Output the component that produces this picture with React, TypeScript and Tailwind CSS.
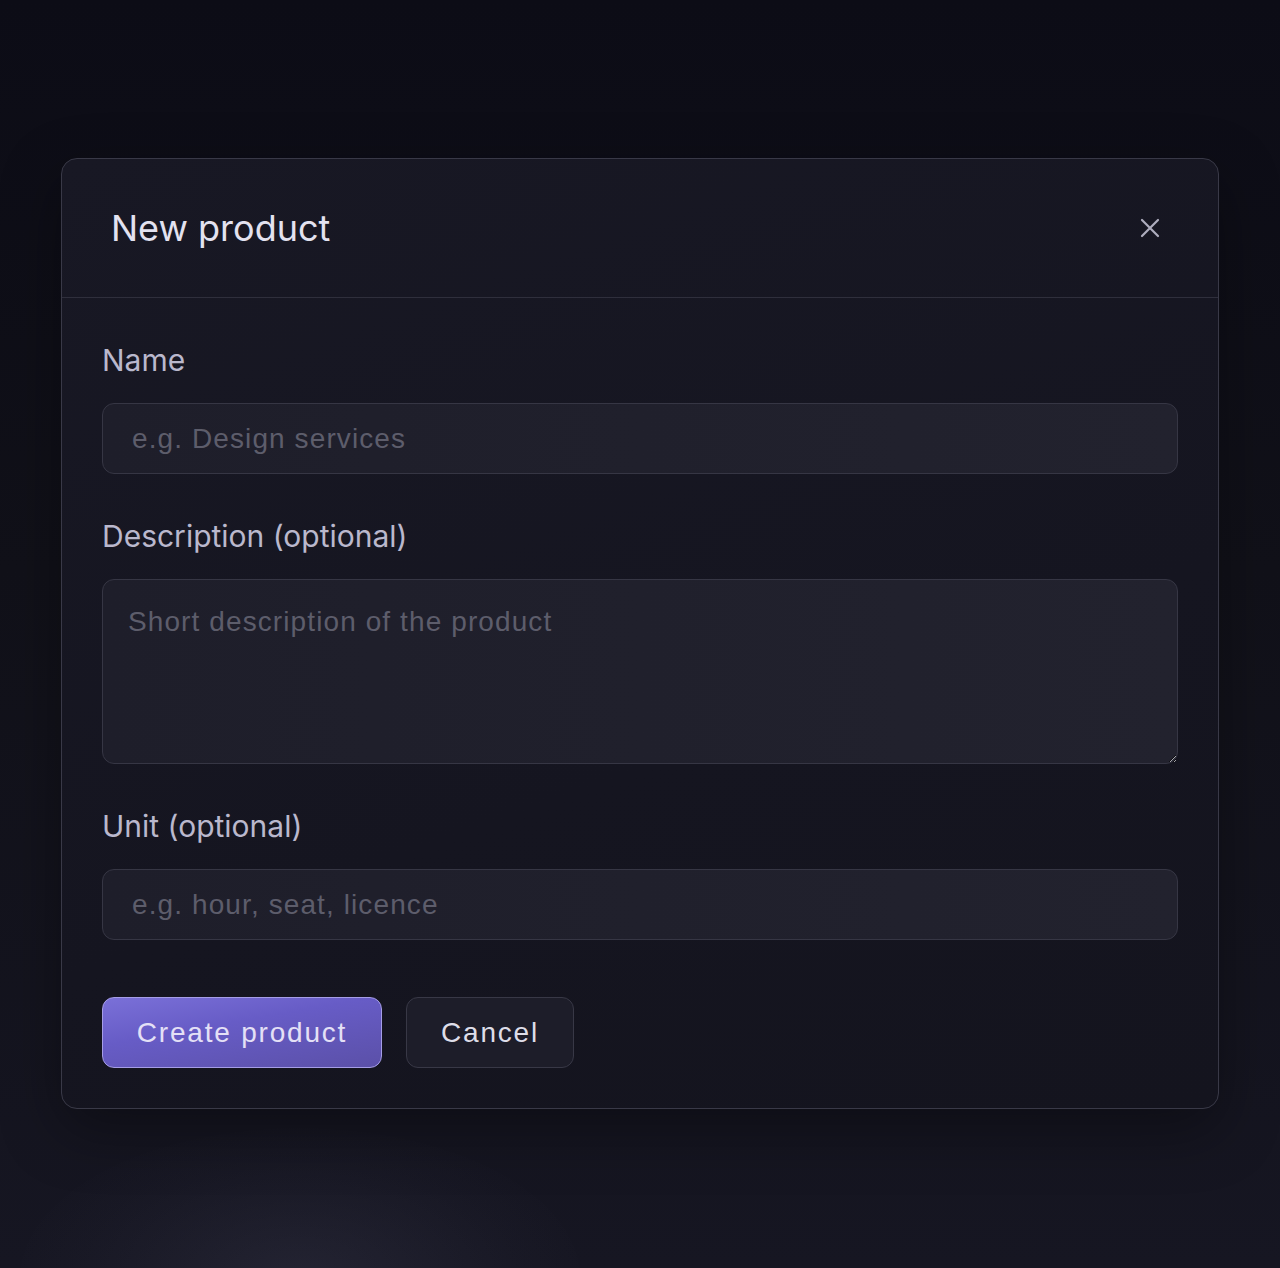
import React from "react";

const fieldCls =
  "mt-[25px] block w-full rounded-[12px] border border-[#363644] bg-[linear-gradient(90deg,#1e1e2a_0%,#22222e_100%)] font-['Liberation_Sans',Arial,sans-serif] text-[28px] tracking-[1.1px] text-[#d8d8e4] placeholder:text-[#5d5d6b] outline-none";
const labelCls =
  "block h-[36px] font-['Inter','Noto_Sans',sans-serif] text-[30px] leading-[36px] text-[#bab8cd]";

export default function App() {
  return (
    <div className="relative min-h-[1268px] w-full overflow-hidden bg-[linear-gradient(180deg,#0c0c16_0%,#111119_45%,#161622_100%)] px-[61px] pt-[158px] font-['Inter','Noto_Sans',sans-serif]">
      <div className="pointer-events-none absolute bottom-[-160px] left-[20px] h-[300px] w-[560px] rounded-[50%] bg-[radial-gradient(ellipse_at_center,rgba(60,60,80,0.35)_0%,rgba(40,40,56,0.15)_55%,transparent_75%)]" />
      <div className="relative rounded-[16px] border border-[#393947] bg-[linear-gradient(160deg,#181824_0%,#151520_60%,#14141e_100%)] shadow-[0_20px_60px_rgba(0,0,0,0.35)]">
        <div className="flex h-[139px] items-center justify-between border-b border-[#2f2f3c] pl-[49px] pr-[58px]">
          <h1 className="text-[36px] font-normal leading-none text-[#e3e2f0]">New product</h1>
          <button className="flex h-[20px] w-[20px] items-center justify-center text-[#aeadbe]" aria-label="Close">
            <svg width="20" height="20" viewBox="0 0 20 20" fill="none" stroke="currentColor" strokeWidth="2.2" strokeLinecap="round">
              <path d="M2 2 L18 18 M18 2 L2 18" />
            </svg>
          </button>
        </div>
        <div className="px-[40px] pt-[44px] pb-[40px]">
          <label className={labelCls}>Name</label>
          <input className={`${fieldCls} h-[71px] px-[29px]`} placeholder="e.g. Design services" />
          <label className={`${labelCls} mt-[44px]`}>Description (optional)</label>
          <textarea
            className={`${fieldCls} h-[185px] px-[25px] pt-[21px] leading-[42px]`}
            placeholder="Short description of the product"
          />
          <label className={`${labelCls} mt-[44px]`}>Unit (optional)</label>
          <input className={`${fieldCls} h-[71px] px-[29px]`} placeholder="e.g. hour, seat, licence" />
          <div className="mt-[57px] flex gap-[24px]">
            <button className="h-[71px] w-[280px] rounded-[12px] border border-[#a59de6] bg-[linear-gradient(170deg,#7a70d8_0%,#675cc6_40%,#5b50a8_100%)] font-['Liberation_Sans',Arial,sans-serif] text-[28px] tracking-[1.8px] text-[#e4e0f6]">
              Create product
            </button>
            <button className="h-[71px] w-[168px] rounded-[12px] border border-[#383846] bg-[#1d1d29] font-['Liberation_Sans',Arial,sans-serif] text-[28px] tracking-[1.8px] text-[#dedde8]">
              Cancel
            </button>
          </div>
        </div>
      </div>
    </div>
  );
}
